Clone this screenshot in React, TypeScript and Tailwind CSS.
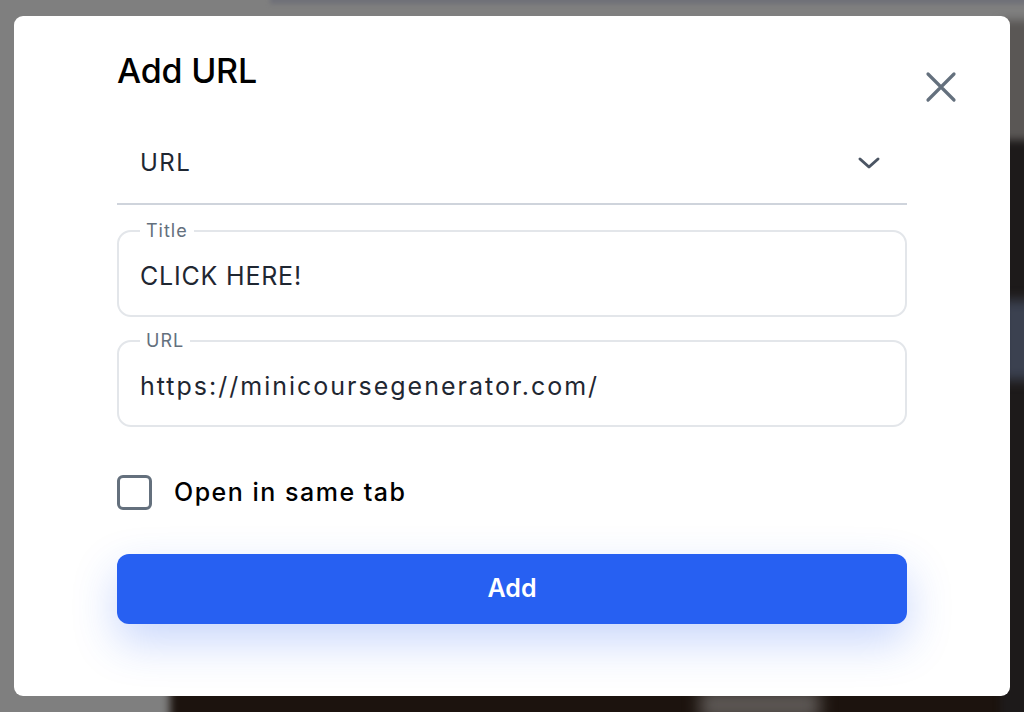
import React from "react";

export default function App() {
  return (
    <div className="relative w-[1024px] h-[712px] overflow-hidden bg-[#7f7f7f]">
      {/* blurred backdrop photo */}
      <div className="absolute left-[170px] top-[560px] w-[900px] h-[200px] bg-[#1c130e] blur-[4px]" />
      <div className="absolute left-[1000px] top-[120px] w-[40px] h-[600px] bg-[#1d1a1a] blur-[3px]" />
      <div className="absolute left-[1000px] top-[300px] w-[40px] h-[80px] bg-[#3b4150] blur-[6px]" />
      <div className="absolute left-[1000px] top-[20px] w-[40px] h-[120px] bg-[#5a5755] blur-[4px]" />
      <div className="absolute left-[270px] top-[-4px] w-[760px] h-[8px] bg-[#6f7078] blur-[2px]" />
      <div className="absolute left-[700px] top-[690px] w-[120px] h-[30px] bg-[#5c5754] blur-[8px]" />

      <div className="relative pt-[16px] pl-[14px]">
        <div className="w-[996px] h-[680px] bg-white rounded-[9px] relative font-['Inter',sans-serif]">
          <button className="absolute right-[52px] top-[54px] w-[34px] h-[34px] flex items-center justify-center text-[#64707d]">
            <svg width="32" height="32" viewBox="0 0 32 32" fill="none" stroke="currentColor" strokeWidth="3.2" strokeLinecap="round">
              <path d="M3 3L29 29M29 3L3 29" />
            </svg>
          </button>
          <div className="pl-[103px] pr-[103px] pt-[34px] flex flex-col">
            <h1 className="text-[34px] leading-[42px] font-medium text-black tracking-[-0.2px]">Add URL</h1>
            <div className="mt-[31px] h-[82px] flex items-center justify-between border-b-2 border-[#cfd4dc] pl-[23px] pr-[26px]">
              <span className="text-[24px] text-[#1f2732] tracking-[1.5px]">URL</span>
              <svg width="24" height="14" viewBox="0 0 24 14" fill="none" stroke="#4b5563" strokeWidth="3" strokeLinecap="round" strokeLinejoin="round">
                <path d="M3 3L12 11L21 3" />
              </svg>
            </div>
            <fieldset className="mt-[16px] h-[96px] border-2 border-[#e3e6ea] rounded-[14px] pl-[21px] pr-[20px]">
              <legend className="px-[6px] text-[18px] leading-[20px] text-[#64707d] tracking-[1px]">Title</legend>
              <div className="mt-[20px] text-[25px] leading-[30px] text-[#1f2732] tracking-[0.8px]">CLICK HERE!</div>
            </fieldset>
            <fieldset className="mt-[14px] h-[96px] border-2 border-[#e3e6ea] rounded-[14px] pl-[21px] pr-[20px]">
              <legend className="px-[6px] text-[18px] leading-[20px] text-[#64707d] tracking-[1px]">URL</legend>
              <div className="mt-[20px] text-[25px] leading-[30px] text-[#1f2732] tracking-[2px]">https://minicoursegenerator.com/</div>
            </fieldset>
            <label className="mt-[47px] flex items-center gap-[22px]">
              <span className="w-[35px] h-[35px] border-[3px] border-[#64707d] rounded-[6px]" />
              <span className="text-[25px] font-medium text-black tracking-[1.5px]">Open in same tab</span>
            </label>
            <button className="mt-[42px] h-[70px] rounded-[12px] bg-[#2760f2] text-white text-[25px] font-semibold shadow-[0_18px_44px_rgba(39,96,242,0.25)]">
              Add
            </button>
          </div>
        </div>
      </div>
    </div>
  );
}
